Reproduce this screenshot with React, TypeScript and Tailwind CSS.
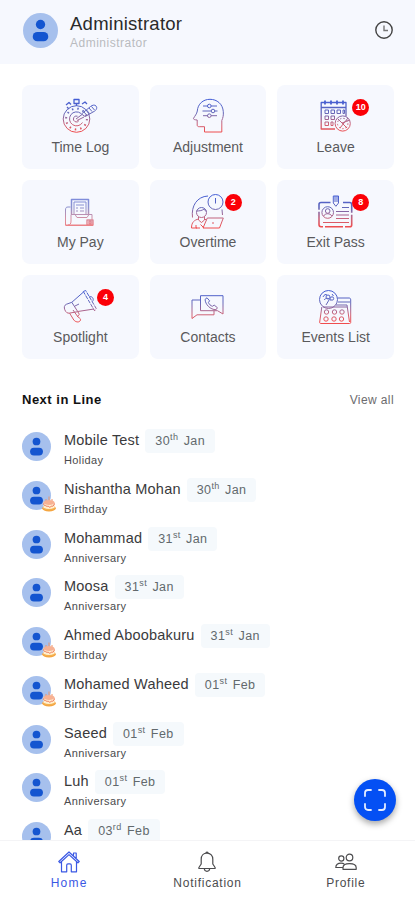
import { ReactNode } from 'react'

type Tile = { label: string; icon: ReactNode; badge?: number; faded?: boolean }
type Entry = { name: string; day: string; suffix: string; month: string; kind?: string }

const tiles: Tile[] = [
  {
    label: 'Time Log',
    icon: (
      <>
        <circle cx="14.5" cy="21" r="13.3" />
        <circle cx="14.5" cy="21" r="10.4" strokeDasharray="1.5 4" strokeWidth="2" />
        <path d="M20.5 24.5A7 7 0 1 1 19 15.5M17 22.5a3 3 0 1 1-1.5-4.3" />
        <path d="M14 21l6-4.5M15 22.500l7-3.500M19.500 16l9-7.500c2-1.500 4-2 5.500-.5s.5 4-1.500 5.200L23 18.500zM22 14l3 3.500M24.500 12l3 3.500M27 10l3 3.500M29.500 8.500l3 3.500" />
        <path d="M14.5 8V5M12 1.500h5v4h-5zM4 7l3-2.500 2 2M20 6l3-2 2 2M5 9l2 2" strokeWidth="1.3" />
      </>
    ),
  },
  {
    label: 'Adjustment',
    icon: (
      <>
        <path d="M31.8 34V22.5C33 20 33.6 17 33.3 13.7 32.8 6 27 1.3 20 1.3S7.8 6 7.3 13c-.5 3-2.5 5-3.8 7.4-.3 1 1.2 1.4 3.7 1.6v5c0 1.3.8 1.7 2 1.7h5.3V34z" />
        <path d="M13 8h5M21 8h6M12.5 13h9M24.5 13h3M13 17.7h5M21 17.7h6" />
        <circle cx="19.3" cy="8" r="1.8" />
        <circle cx="23" cy="13" r="1.8" />
        <circle cx="19.3" cy="17.7" r="1.8" />
      </>
    ),
  },
  {
    label: 'Leave',
    badge: 10,
    icon: (
      <>
        <path d="M17 31H3.2V4.5H28v14M3.2 9.5H28" strokeWidth="1.3" />
        <path d="M7 2.5v4M13 2.5v4M19 2.5v4M25 2.5v4" strokeWidth="1.8" />
        <path d="M7 12h3.5v3.5H7zM13 12h3.5v3.5H13zM19 12h3.5v3.5H19zM7 18h3.5v3.5H7zM13 18h3.5v3.5H13zM7 24h3.5v3.5H7zM13 24h2v3.5h-2zM25 12h1.5v3.5H25z" />
        <circle cx="24.7" cy="25.5" r="7.6" />
        <circle cx="24.7" cy="25.5" r="5.2" strokeDasharray="1.5 2" />
        <path d="M20 21l9 9M30 20l-8 10M24 25l8-3" />
      </>
    ),
  },
  {
    label: 'My Pay',
    faded: true,
    icon: (
      <>
        <path d="M9.5 21V6.5h17V21" strokeWidth="1.5" />
        <path d="M12 21V9h12v12M14 12h8M14 15h2M18 15h4M14 18h2M18 18h4" />
        <path d="M8.5 14H6c-2 0-2.5 1-2.5 3v15H30V21.5H9V28c0 3-1 4-3 4" />
        <path d="M13 21.5l2 3h10l2-3M3.5 32.5H31" />
        <path d="M25 27h6v5h-6zM27 28.500h2v2h-2z" strokeWidth="1.4" />
      </>
    ),
  },
  {
    label: 'Overtime',
    badge: 2,
    icon: (
      <>
        <path d="M2.5 24.5C1 13 7 3.5 18 3M32 16.5l.5 5.5" />
        <circle cx="25.5" cy="9" r="7.5" />
        <path d="M25.5 5v5.500" />
        <circle cx="11.5" cy="19.5" r="5" />
        <path d="M6.5 18c3 0 6-.5 7.5-2 .5 1.5 1.5 2 2.5 2M8.5 24v3l3 2.5 3-2.5v-3M8.5 26c-4 1-7 3-7 9H7M14.5 26l2 1M6 32v3h4" />
        <path d="M13 35l4.3-10h16L29.5 35zM10.5 31.5l3.5 3.5M22 30h2" />
      </>
    ),
  },
  {
    label: 'Exit Pass',
    badge: 8,
    icon: (
      <>
        <path d="M12.5 9.5H3c-1.5 0-2 .7-2 2v20c0 1.5.7 2.2 2 2.2h29c1.3 0 1.7-.7 1.7-2v-20c0-1.5-.7-2.2-2-2.2H23" strokeWidth="1.6" strokeDasharray="18 2" />
        <path d="M15.3 3h5.2v7l-2.6 3.3-2.6-3.3zM17 3v6M19 3v6" />
        <circle cx="9.7" cy="19.5" r="5.8" />
        <circle cx="9.7" cy="18" r="2.3" />
        <path d="M5.7 23c1-3 7-3 8 0M18 18.5h13M18 22h13M18 25.5h13M5 29.5h26M24 14.5h7" />
      </>
    ),
  },
  {
    label: 'Spotlight',
    badge: 4,
    icon: (
      <>
        <path d="M9.8 14.3L21.5 4M15.8 23.5L32 21" />
        <path d="M21.3 3.5l2.4-1 10.5 18-1.6 2.3z" strokeDasharray="4 1" />
        <path d="M9.8 14.3l6 9.4M9.8 14.3l-5.5 2c-2 1-2.5 3-1.5 5.5 1 2.5 2.6 3.7 4.7 3.3l8.3-1.4" />
        <path d="M7.5 25l4.3 7c1.6 2 4.8 2.7 6.2 1 .9-1.2.6-2.2-.5-3l-2-1.5 1.8-2.2-1.5-2.6M11 22l5 7" />
        <path d="M27 9c3-1.5 5.5 2 3.5 4.5M13 18l4-2" />
      </>
    ),
  },
  {
    label: 'Contacts',
    icon: (
      <>
        <path d="M10.5 7.7H33V26l-5.5-3.3h-17z" />
        <path d="M10.5 12H2v18.5l5-3.7h17v-4" />
        <path d="M17 9.8l2.6 3-1.2 1.7c.8 1.9 2.2 3.2 4 3.8l1.8-1.2 3.2 2.6-1.3 2c-5.8.1-11-5.4-11-10.4z" />
      </>
    ),
  },
  {
    label: 'Events List',
    icon: (
      <>
        <circle cx="10.5" cy="11.5" r="9" />
        <circle cx="10" cy="9" r="2" />
        <circle cx="14" cy="10.5" r="1.7" />
        <path d="M6 12c2-2.5 5-2 6.5.5M5 9c1-2.5 3-3 4-2M11 12l-3 5M14 6l1.5 2" />
        <path d="M19.5 10H31c1.3 0 1.7.7 1.7 2v22.5c0 .7-.5 1-1.2 1H3c-1 0-1.5-.5-1.3-1.5L3.8 19M18 17h11l2.5 17M20 14h12M5 19h24" />
        {[8.5, 16.5, 24].map(x => (
          <g key={x}>
            <circle cx={x} cy="24" r="2.2" />
            <circle cx={x - 0.5} cy="31" r="2.2" />
          </g>
        ))}
      </>
    ),
  },
]

const entries: Entry[] = [
  { name: 'Mobile Test', day: '30', suffix: 'th', month: 'Jan', kind: 'Holiday' },
  { name: 'Nishantha Mohan', day: '30', suffix: 'th', month: 'Jan', kind: 'Birthday' },
  { name: 'Mohammad', day: '31', suffix: 'st', month: 'Jan', kind: 'Anniversary' },
  { name: 'Moosa', day: '31', suffix: 'st', month: 'Jan', kind: 'Anniversary' },
  { name: 'Ahmed Aboobakuru', day: '31', suffix: 'st', month: 'Jan', kind: 'Birthday' },
  { name: 'Mohamed Waheed', day: '01', suffix: 'st', month: 'Feb', kind: 'Birthday' },
  { name: 'Saeed', day: '01', suffix: 'st', month: 'Feb', kind: 'Anniversary' },
  { name: 'Luh', day: '01', suffix: 'st', month: 'Feb', kind: 'Anniversary' },
  { name: 'Aa', day: '03', suffix: 'rd', month: 'Feb' },
]

function Avatar({ className }: { className: string }) {
  return (
    <svg viewBox="0 0 36 36" className={className}>
      <circle cx="18" cy="18" r="18" fill="#a6c0ed" />
      <circle cx="18" cy="11.8" r="4.8" fill="#1455d0" />
      <rect x="10" y="19.5" width="16" height="9.6" rx="4.8" fill="#1455d0" />
    </svg>
  )
}

function Cake() {
  return (
    <svg viewBox="0 0 14 16" className="absolute left-[20px] top-[18px] w-[14px] h-[16px]">
      <path d="M7 .5v5M4 3v3M10 3v3" stroke="#ee9468" strokeWidth="1" />
      <ellipse cx="7" cy="12.3" rx="6.8" ry="3.2" fill="#f5a33d" />
      <path d="M1.500 6v6c1 2.300 10 2.300 11 0V6z" fill="#fff0cf" />
      <ellipse cx="7" cy="6.500" rx="5.500" ry="2.500" fill="#f7b193" />
      <path d="M1.500 7.500c.5 3 2 1.500 2.800 2.500s1.800-.5 2.700.8 1.900-.8 2.700-.6 2.200 0 2.800-2.700" fill="none" stroke="#ef6f55" strokeWidth="1" />
      <path d="M2 12.500c2 1.500 8 1.500 10 0" fill="none" stroke="#f3b04e" strokeWidth="1.500" />
    </svg>
  )
}

function TileCard({ tile }: { tile: Tile }) {
  return (
    <div className="relative h-[84px] rounded-lg bg-[#f6f8fe] flex flex-col items-center pt-[13px]">
      <svg
        viewBox="0 0 36 36"
        className={`w-9 h-9 ${tile.faded ? 'opacity-60' : 'opacity-85'}`}
        fill="none"
        stroke="url(#ink)"
        strokeWidth="1"
        strokeLinejoin="round"
      >
        {tile.icon}
      </svg>
      <span className="mt-[3px] text-[14px] leading-5 text-[#5a5a5c] whitespace-nowrap">{tile.label}</span>
      {tile.badge && (
        <span className="absolute left-[75px] top-[14px] w-[17px] h-[17px] rounded-full bg-[#fb0007] text-white text-[9px] font-bold flex items-center justify-center">
          {tile.badge}
        </span>
      )}
    </div>
  )
}

function EntryRow({ entry }: { entry: Entry }) {
  return (
    <div className="flex h-[48.75px] shrink-0">
      <div className="relative w-[42px] pt-[3px]">
        <Avatar className="w-[29px] h-[29px]" />
        {entry.kind === 'Birthday' && <Cake />}
      </div>
      <div>
        <div className="flex items-center h-6">
          <span className="text-[14.5px] tracking-[0.2px] text-[#3a3a3c] whitespace-nowrap">{entry.name}</span>
          <span className="ml-[6px] h-6 px-[10px] rounded bg-[#f5f9fc] text-[12.5px] leading-6 tracking-[0.4px] [word-spacing:1.5px] text-[#62696d] whitespace-nowrap">
            {entry.day}
            <sup className="text-[9px] leading-none -top-[5px]">{entry.suffix}</sup> {entry.month}
          </span>
        </div>
        {entry.kind && <p className="text-[11px] leading-[15px] tracking-[0.4px] text-[#4a4a4c]">{entry.kind}</p>}
      </div>
    </div>
  )
}

export default function App() {
  return (
    <div className="relative w-[415px] h-[900px] overflow-hidden bg-white flex flex-col font-['Liberation_Sans',Arial,sans-serif]">
      {/* Shared stroke gradient for the tile icons */}
      <svg className="absolute w-0 h-0">
        <defs>
          <linearGradient id="ink" gradientUnits="userSpaceOnUse" x1="0" y1="2" x2="0" y2="34">
            <stop offset="0" stopColor="#2443cf" />
            <stop offset="0.4" stopColor="#4a4fae" />
            <stop offset="0.75" stopColor="#c44a62" />
            <stop offset="1" stopColor="#ef3030" />
          </linearGradient>
        </defs>
      </svg>

      <header className="h-16 shrink-0 bg-[#f6f8fe] flex items-center pl-[23px] pr-[22px]">
        <Avatar className="w-[35px] h-[35px] -mt-1" />
        <div className="ml-3 -mt-[1px] flex-1">
          <h1 className="text-[18.5px] leading-[22px] tracking-[0.25px] text-[#2a2a2a]">Administrator</h1>
          <p className="text-[12px] leading-4 tracking-[0.5px] text-[#b9bbbf]">Administrator</p>
        </div>
        <svg viewBox="0 0 18 18" className="w-[18px] h-[18px] -mt-1" fill="none" stroke="#444" strokeWidth="1.4">
          <circle cx="9" cy="9" r="8.2" />
          <path d="M9 4.5v5h4" stroke="#777" />
        </svg>
      </header>

      <main className="flex-1 min-h-0 overflow-hidden pl-[22px] pr-[21px] pt-[21px]">
        <div className="grid grid-cols-3 gap-[11px]">
          {tiles.map(tile => (
            <TileCard key={tile.label} tile={tile} />
          ))}
        </div>

        <div className="mt-[31px] mb-[19px] h-5 flex items-center justify-between">
          <h2 className="text-[13px] font-bold tracking-[0.5px] text-[#111]">Next in Line</h2>
          <span className="text-[12px] tracking-[0.4px] text-[#6c6c6e]">View all</span>
        </div>

        <div className="flex flex-col">
          {entries.map(entry => (
            <EntryRow key={entry.name} entry={entry} />
          ))}
        </div>
      </main>

      <button className="absolute left-[354px] top-[779px] w-[42px] h-[42px] rounded-full bg-[#0450f4] shadow-[0_3px_6px_rgba(0,0,0,0.35)] flex items-center justify-center">
        <svg viewBox="0 0 22 22" className="w-[22px] h-[22px]" fill="none" stroke="#e4edff" strokeWidth="1.8" strokeLinecap="round">
          <path d="M1 7V4a3 3 0 0 1 3-3h3M15 1h3a3 3 0 0 1 3 3v3M21 15v3a3 3 0 0 1-3 3h-3M7 21H4a3 3 0 0 1-3-3v-3" />
        </svg>
      </button>

      <nav className="h-[60px] shrink-0 bg-white border-t border-[#f4f4f6] grid grid-cols-3 text-[12px] tracking-[0.75px] text-[#4c4c4e]">
        <div className="flex flex-col items-center pt-[10px] text-[#3a58e4]">
          <svg viewBox="0 0 22 22" className="w-[22px] h-[22px]" fill="none" stroke="currentColor" strokeWidth="1.2" strokeLinejoin="round">
            <path d="M.8 10.5L11 1l10.2 9.5-1.3 1.3L11 3.6l-8.9 8.2zM3.5 11v9.8h5.2v-6.5c0-1 .5-1.5 1.3-1.5h2c.8 0 1.3.5 1.3 1.5v6.5h5.2V11M15.5 4.5V2h2.7v5" />
          </svg>
          <span className="leading-5 tracking-[1.2px]">Home</span>
        </div>
        <div className="flex flex-col items-center pt-[10px]">
          <svg viewBox="0 0 22 22" className="w-[22px] h-[22px]" fill="none" stroke="currentColor" strokeWidth="1.2" strokeLinejoin="round">
            <path d="M11 2.2c-3.7 0-5.8 2.6-5.8 6V13L2.9 16.5v1h16.2v-1L16.8 13V8.2c0-3.4-2.1-6-5.8-6zM9.8 2.2c0-1.600 2.400-1.600 2.400 0M8.3 17.800c.3 3.300 5.100 3.300 5.400 0" />
          </svg>
          <span className="leading-5">Notification</span>
        </div>
        <div className="flex flex-col items-center pt-[10px]">
          <svg viewBox="0 0 22 22" className="w-[22px] h-[22px]" fill="none" stroke="currentColor" strokeWidth="1.2" strokeLinejoin="round">
            <circle cx="6.3" cy="7.5" r="2.6" />
            <circle cx="14.5" cy="6.5" r="3.3" />
            <path d="M8 18.3v-1.6c0-2.5 2.7-4 6.5-4s6.700 1.500 6.700 4v1.600zM7.800 16.500H.8c0-2.800 2-4.300 5.200-4.300 1.300 0 2.500.3 3.300.8" />
          </svg>
          <span className="leading-5">Profile</span>
        </div>
      </nav>
    </div>
  )
}
